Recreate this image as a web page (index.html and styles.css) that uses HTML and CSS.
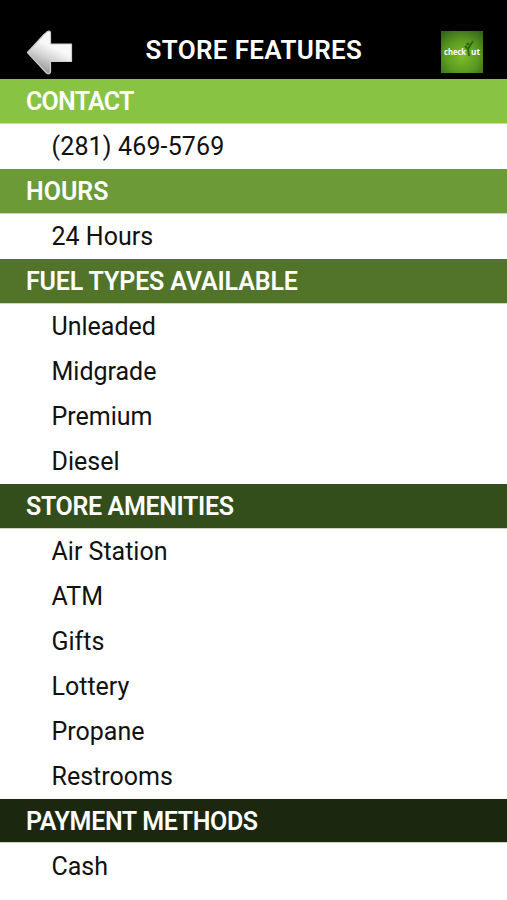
FILE: index.html
```html
<!DOCTYPE html>
<html lang="en">
<head>
<meta charset="utf-8">
<title>Store Features</title>
<link rel="stylesheet" href="styles.css">
</head>
<body>
<header class="topbar">
  <svg class="back" viewBox="0 0 50 50" role="img" aria-label="Back">
    <defs>
      <linearGradient id="metal" x1="0.2" y1="0.9" x2="0.55" y2="0.2">
        <stop offset="0" stop-color="#929292"/>
        <stop offset="0.45" stop-color="#d2d2d2"/>
        <stop offset="0.8" stop-color="#f8f8f8"/>
      </linearGradient>
    </defs>
    <path d="M2.5 25.5 L19 7.500 Q25.500 1 25.500 6.500 V17 H46.500 V34.500 H25.500 V45 Q24.500 48 21.500 46 Z" fill="url(#metal)" stroke="#cfcfcf" stroke-width="1.200" stroke-linejoin="round"/>
  </svg>
  <h1 class="title"><span>STORE FEATURES</span></h1>
  <svg class="logo" viewBox="0 0 42 42" role="img" aria-label="Checkout">
    <defs>
      <radialGradient id="leaf" cx="0.5" cy="0.6" r="0.72">
        <stop offset="0" stop-color="#7dbd28"/>
        <stop offset="0.55" stop-color="#5b9921"/>
        <stop offset="1" stop-color="#35651a"/>
      </radialGradient>
    </defs>
    <rect width="42" height="42" fill="url(#leaf)"/>
    <path d="M24 15 L27 18 L32 10 M27 17 L28 25" fill="none" stroke="#2c6416" stroke-width="1.800"/>
    <circle cx="27" cy="13" r="1.600" fill="#2c6416"/>
    <text class="logo-text" x="3" y="24.300" textLength="22" lengthAdjust="spacingAndGlyphs">check</text>
    <text class="logo-text" x="30" y="24.300" textLength="9" lengthAdjust="spacingAndGlyphs">ut</text>
  </svg>
</header>
<main class="list">
  <h2 class="contact"><span>CONTACT</span></h2>
  <p><span>(281) 469-5769</span></p>
  <h2 class="hours"><span>HOURS</span></h2>
  <p><span>24 Hours</span></p>
  <h2 class="fuel"><span>FUEL TYPES AVAILABLE</span></h2>
  <p><span>Unleaded</span></p>
  <p><span>Midgrade</span></p>
  <p><span>Premium</span></p>
  <p><span>Diesel</span></p>
  <h2 class="amenities"><span>STORE AMENITIES</span></h2>
  <p><span>Air Station</span></p>
  <p><span>ATM</span></p>
  <p><span>Gifts</span></p>
  <p><span>Lottery</span></p>
  <p><span>Propane</span></p>
  <p><span>Restrooms</span></p>
  <h2 class="payment"><span>PAYMENT METHODS</span></h2>
  <p><span>Cash</span></p>
</main>
</body>
</html>
```
FILE: styles.css
```css
* { box-sizing: border-box; }
body {
  margin: 0;
  height: 900px;
  overflow: hidden;
  background: #fff;
  color: #111;
  font-family: Roboto, "Liberation Sans", sans-serif;
}
h1, h2, p { margin: 0; }
.topbar {
  display: grid;
  grid-template-columns: 50px 1fr 42px;
  align-items: center;
  height: 79px;
  padding: 24px 24px 0 25px;
  background: #000;
}
.back { width: 50px; height: 50px; }
.logo { width: 42px; height: 42px; margin-top: 1px; }
.logo-text {
  fill: #fff;
  font: 700 9px "Open Sans", sans-serif;
}
.title {
  padding-left: 70.5px;
  margin-bottom: 4px;
  color: #fff;
  font-size: 26px;
  font-weight: 600;
  letter-spacing: 0.35px;
  line-height: 30px;
  white-space: nowrap;
}
.list {
  display: grid;
  grid-auto-rows: 44.97px;
}
.list h2, .list p {
  display: flex;
  align-items: center;
  white-space: nowrap;
}
.list h2 {
  padding: 2px 0 0 26px;
  border-bottom: 1px solid #cbd5c0;
  color: #fff;
  font-size: 25px;
  font-weight: 600;
  letter-spacing: -0.35px;
}
.list p {
  padding: 1px 0 0 51.5px;
  font-size: 25px;
  font-weight: 400;
}
.list p:nth-child(2) { letter-spacing: 0.15px; }
.list .contact { background: #89c344; letter-spacing: -0.75px; }
.list .hours { background: #6c9a37; letter-spacing: 0; }
.list .fuel { background: #517429; letter-spacing: -0.15px; }
.amenities { background: #344e1b; }
.payment { background: #1b270e; }
```
